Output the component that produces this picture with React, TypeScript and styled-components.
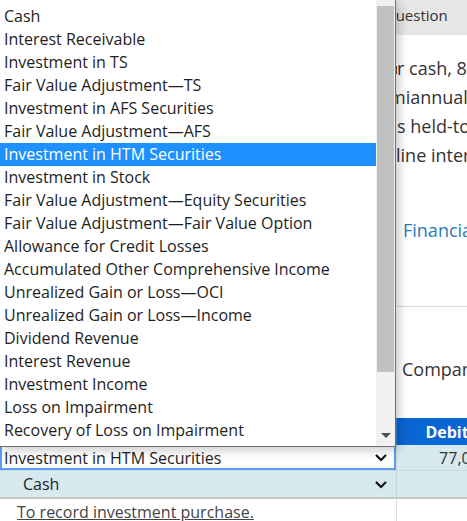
import React from 'react';
import styled, { createGlobalStyle } from 'styled-components';

const Global = createGlobalStyle`
  html, body {
    margin: 0;
    padding: 0;
    overflow: hidden;
    background: #fff;
  }
  body {
    font-family: 'Open Sans', 'Liberation Sans', sans-serif;
    color: #333;
  }
`;

// Page behind the open list
const Page = styled.div`
  position: relative;
  width: 640px;
  height: 521px;
`;

const TabBar = styled.div`
  height: 35px;
  box-sizing: border-box;
  background: #e6e6e6;
  padding: 5px 0 0 384px;
  font-size: 15px;
  line-height: 20px;
  color: #333;
`;

const Question = styled.div`
  margin-top: 19px;
  font-size: 18px;
  line-height: 29px;
  color: #333;
`;

const Line = styled.div`
  display: flex;
  white-space: nowrap;
`;

const Lead = styled.span<{ $w: number }>`
  flex: 0 0 ${(p) => p.$w}px;
  overflow: hidden;
  text-align: right;
`;

const Link = styled.div`
  margin-top: 46px;
  padding-left: 403px;
  font-size: 18px;
  line-height: 28px;
  color: #2b7bb9;
`;

const Rule = styled.hr`
  margin: 62px 0 0 397px;
  border: 0;
  border-top: 1px solid #d9d9e3;
`;

const Company = styled.div`
  margin-top: 48px;
  padding-left: 402px;
  font-size: 18px;
  line-height: 28px;
`;

const Table = styled.div`
  margin-top: 35px;
  display: grid;
  grid-template-columns: 397px 100px 1fr;
  font-size: 16px;
`;

const Head = styled.div<{ $first?: boolean }>`
  height: 27px;
  background: #0a66d3;
  color: #fff;
  font-weight: 700;
  display: flex;
  align-items: center;
  justify-content: center;
  border-right: ${(p) => (p.$first ? '1px solid #3d86dc' : 'none')};
`;

const Cell = styled.div<{ $first?: boolean; $bottom?: string; $h?: number }>`
  height: ${(p) => p.$h ?? 26}px;
  background: #d5e9ef;
  border-right: ${(p) => (p.$first ? '1px solid #c9d9de' : 'none')};
  border-bottom: ${(p) => p.$bottom || '1px solid #c9d9de'};
  display: flex;
  align-items: center;
  justify-content: flex-end;
  padding-right: 8px;
  box-sizing: border-box;
`;

const FieldCell = styled(Cell)`
  padding-right: 0;
  justify-content: stretch;
`;

const Select = styled.div<{ $focus?: boolean; $indent?: number }>`
  flex: 1;
  height: 100%;
  box-sizing: border-box;
  display: flex;
  align-items: center;
  justify-content: space-between;
  padding: 0 6px 0 ${(p) => p.$indent ?? 2}px;
  background: ${(p) => (p.$focus ? '#fff' : 'transparent')};
  border: ${(p) => (p.$focus ? '2px solid #5c9df3' : '2px solid transparent')};
  color: #1e1e1e;
`;

const Memo = styled.div`
  height: 26px;
  border-right: 1px solid #dcdcdc;
  padding-left: 17px;
  display: flex;
  align-items: center;
  color: #444;
  text-decoration: underline;
  font-size: 16px;
`;

const Blank = styled.div`
  height: 26px;
`;

// Open option list
const Dropdown = styled.div`
  position: absolute;
  top: 0;
  left: 0;
  width: 396px;
  height: 447px;
  box-sizing: border-box;
  background: #fff;
  border-right: 1px solid #6e6e6e;
  border-bottom: 1px solid #6e6e6e;
  box-shadow: 3px 3px 10px rgba(0, 0, 0, 0.22);
  display: flex;
`;

const Options = styled.div`
  flex: 1;
  padding-top: 5px;
  overflow: hidden;
`;

const Option = styled.div<{ $active?: boolean }>`
  height: 23px;
  line-height: 23px;
  padding-left: 4px;
  font-size: 16px;
  white-space: nowrap;
  color: ${(p) => (p.$active ? '#fff' : '#1e1e1e')};
  background: ${(p) => (p.$active ? '#1e90ff' : 'transparent')};
`;

const Track = styled.div`
  width: 19px;
  background: #f1f1f1;
  display: flex;
  flex-direction: column;
  align-items: center;
`;

const Thumb = styled.div`
  margin-top: 6px;
  width: 17px;
  height: 366px;
  background: #c1c1c1;
`;

const ArrowDown = styled.div`
  margin-top: auto;
  margin-bottom: 8px;
  width: 0;
  height: 0;
  border-left: 5px solid transparent;
  border-right: 5px solid transparent;
  border-top: 5px solid #505050;
`;

const Chevron = () => (
  <svg width="14" height="9" viewBox="0 0 14 9">
    <path d="M2 2 L7 7 L12 2" fill="none" stroke="#111" strokeWidth="2.2" />
  </svg>
);

const accounts = [
  'Cash',
  'Interest Receivable',
  'Investment in TS',
  'Fair Value Adjustment—TS',
  'Investment in AFS Securities',
  'Fair Value Adjustment—AFS',
  'Investment in HTM Securities',
  'Investment in Stock',
  'Fair Value Adjustment—Equity Securities',
  'Fair Value Adjustment—Fair Value Option',
  'Allowance for Credit Losses',
  'Accumulated Other Comprehensive Income',
  'Unrealized Gain or Loss—OCI',
  'Unrealized Gain or Loss—Income',
  'Dividend Revenue',
  'Interest Revenue',
  'Investment Income',
  'Loss on Impairment',
  'Recovery of Loss on Impairment',
];

const App: React.FC = () => {
  const selected = 'Investment in HTM Securities';
  return (
    <>
      <Global />
      <Page>
        <TabBar>Question</TabBar>
        <Question>
          <Line>
            <Lead $w={397}>On January 1, the company purchased bonds fo</Lead>
            <span>r cash, 8% stated rate</span>
          </Line>
          <Line>
            <Lead $w={389}>with interest payable se</Lead>
            <span>miannual on June 30</span>
          </Line>
          <Line>
            <Lead $w={397}>The bonds are classified a</Lead>
            <span>s held-to-maturity</span>
          </Line>
          <Line>
            <Lead $w={396}>Use the straight-</Lead>
            <span>line interest method</span>
          </Line>
        </Question>
        <Link>Financial Statement</Link>
        <Rule />
        <Company>Company</Company>
        <Table>
          <Head $first>Account</Head>
          <Head>Debit</Head>
          <Head>Credit</Head>

          <FieldCell $first>
            <Select $focus>
              {selected}
              <Chevron />
            </Select>
          </FieldCell>
          <Cell>77,000</Cell>
          <Cell />

          <FieldCell $first $h={28} $bottom="2px solid #c4c4c4">
            <Select $indent={21}>
              Cash
              <Chevron />
            </Select>
          </FieldCell>
          <Cell $h={28} $bottom="2px solid #c4c4c4" />
          <Cell $h={28} $bottom="2px solid #c4c4c4">77,000</Cell>

          <Memo>To record investment purchase.</Memo>
          <Blank />
          <Blank />
        </Table>

        <Dropdown>
          <Options>
            {accounts.map((a) => (
              <Option key={a} $active={a === selected}>
                {a}
              </Option>
            ))}
          </Options>
          <Track>
            <Thumb />
            <ArrowDown />
          </Track>
        </Dropdown>
      </Page>
    </>
  );
};

export default App;
